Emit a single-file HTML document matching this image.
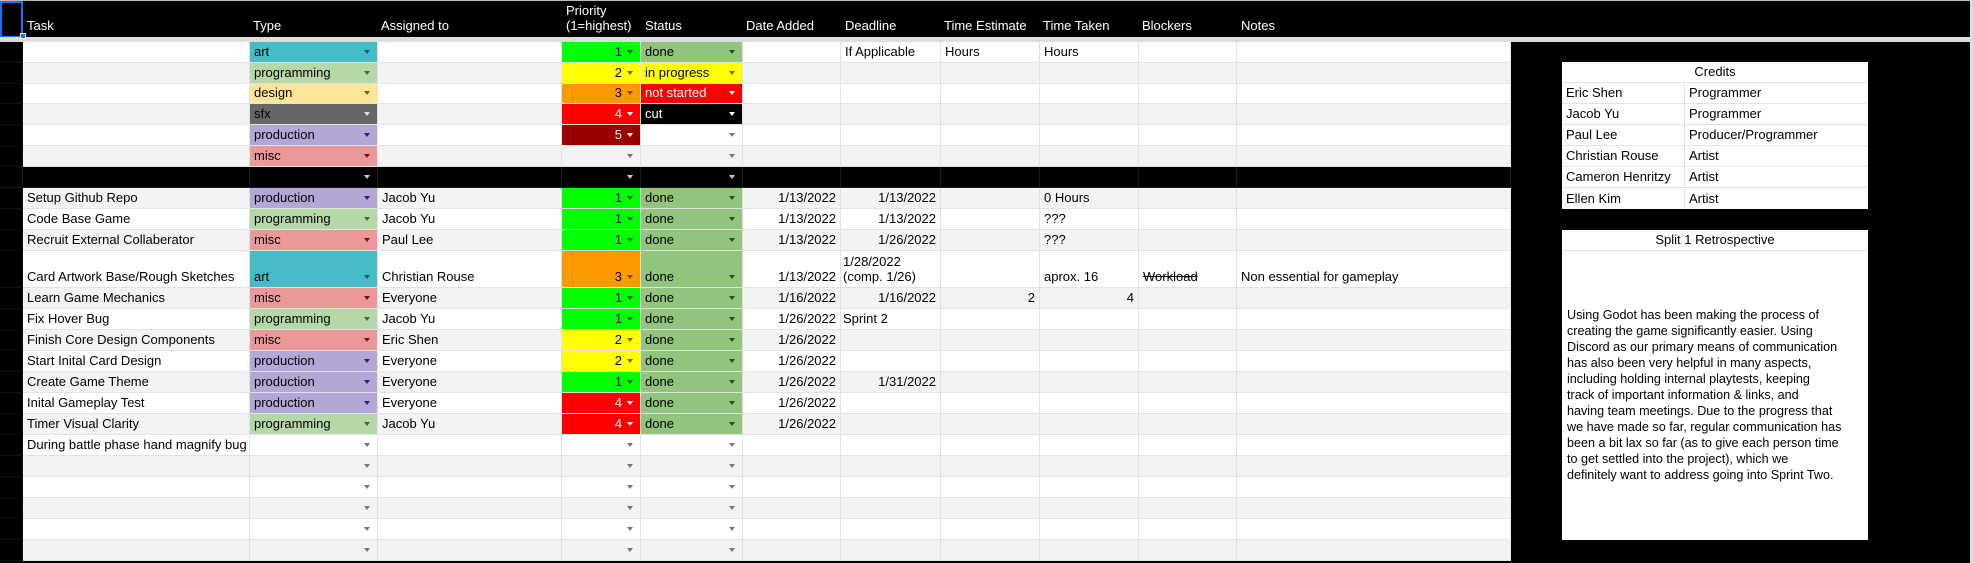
<!DOCTYPE html>
<html><head><meta charset="utf-8"><style>
*{margin:0;padding:0;box-sizing:border-box}
body{width:1973px;height:563px;overflow:hidden;background:#000;font-family:"Liberation Sans",sans-serif;font-size:13px;color:#000;position:relative}
.row{display:grid;grid-template-columns:23px 227px 128px 184px 79px 102px 98px 100px 99px 99px 98px 274px;height:21px;width:1511px}
.row>div{border-right:1px solid #e2e2e2;border-bottom:1px solid #e2e2e2;padding:0 4px 3px 4px;display:flex;align-items:flex-end;white-space:nowrap;overflow:hidden;position:relative;background:#fff;line-height:15px}
.row.g>div{background:#f3f3f3}
.row>div:first-child,.row.g>div:first-child{background:#000;border-color:#111}
.r{justify-content:flex-end}
.d{padding-right:18px!important}
.d::after{content:"";position:absolute;right:7px;bottom:8px;border-left:3.5px solid transparent;border-right:3.5px solid transparent;border-top:4px solid var(--ac,#777)}
.row>div.art{background:#46bdc6;--ac:#1b5e63}
.row>div.prog{background:#b6d7a8;--ac:#38761d}
.row>div.des{background:#ffe599;--ac:#7f6000}
.row>div.sfx{background:#666;--ac:#ddd}
.row>div.prod{background:#b4a7d6;--ac:#351c75}
.row>div.misc{background:#ea9999;--ac:#990000}
.row>div.p1{background:#00ff00;--ac:#1b5e20}
.row>div.p2{background:#ffff00;--ac:#7f6000}
.row>div.p3{background:#ff9900;--ac:#783f04}
.row>div.p4{background:#ff0000;color:#fff;--ac:#fff}
.row>div.p5{background:#990000;color:#fff;--ac:#fff}
.row>div.done{background:#93c47d;--ac:#274e13}
.row>div.inp{background:#ffff00;--ac:#7f6000}
.row>div.ns{background:#ff0000;color:#fff;--ac:#fff}
.row>div.cut{background:#000;color:#fff;--ac:#fff}
.row.blk>div{background:#000;border-color:#1a1a1a;--ac:#ccc}
.hdr{position:absolute;left:0;top:0;width:1973px;height:37px;background:#000;border-top:1px solid #bbb}
.hdr div{position:absolute;bottom:4px;color:#fff;line-height:15px;white-space:nowrap}
.band{position:absolute;left:0;top:37px;width:1973px;height:5px;background:#dadce0}
.body{position:absolute;left:0;top:42px}
.row.tall{height:37px}
.box{position:absolute;left:1562px;width:306px;background:#fff}
.box .c{height:21px;border-bottom:1px solid #e2e2e2;display:flex;align-items:flex-end;padding-bottom:3px;line-height:15px}
.box .c span{display:block;padding-left:4px}
.box .c span:first-child{width:123px;border-right:1px solid #e2e2e2;height:20px;margin-bottom:-3px;padding-top:2px}
.box .c span:last-child{height:20px;margin-bottom:-3px;padding-top:2px}
</style></head><body>
<div class="hdr">
<div style="left:0;top:0;bottom:auto;width:23px;height:37px;border:2px solid #1a73e8"></div>
<div style="left:27px">Task</div>
<div style="left:253px">Type</div>
<div style="left:381px">Assigned to</div>
<div style="left:566px">Priority<br>(1=highest)</div>
<div style="left:645px">Status</div>
<div style="left:746px">Date Added</div>
<div style="left:845px">Deadline</div>
<div style="left:944px">Time Estimate</div>
<div style="left:1043px">Time Taken</div>
<div style="left:1142px">Blockers</div>
<div style="left:1241px">Notes</div>
</div>
<div class="band"></div>
<div style="position:absolute;left:20px;top:33px;width:6px;height:6px;background:#1a73e8;border:1px solid #fff"></div>
<div class="body">
<div class="row"><div></div><div></div><div class="d art">art</div><div></div><div class="d r p1">1</div><div class="d done">done</div><div></div><div>If Applicable</div><div>Hours</div><div>Hours</div><div></div><div></div></div>
<div class="row g"><div></div><div></div><div class="d prog">programming</div><div></div><div class="d r p2">2</div><div class="d inp">in progress</div><div></div><div></div><div></div><div></div><div></div><div></div></div>
<div class="row" style="height:20px"><div></div><div></div><div class="d des">design</div><div></div><div class="d r p3">3</div><div class="d ns">not started</div><div></div><div></div><div></div><div></div><div></div><div></div></div>
<div class="row g"><div></div><div></div><div class="d sfx">sfx</div><div></div><div class="d r p4">4</div><div class="d cut">cut</div><div></div><div></div><div></div><div></div><div></div><div></div></div>
<div class="row"><div></div><div></div><div class="d prod">production</div><div></div><div class="d r p5">5</div><div class="d"></div><div></div><div></div><div></div><div></div><div></div><div></div></div>
<div class="row g"><div></div><div></div><div class="d misc">misc</div><div></div><div class="d"></div><div class="d"></div><div></div><div></div><div></div><div></div><div></div><div></div></div>
<div class="row blk"><div></div><div></div><div class="d"></div><div></div><div class="d"></div><div class="d"></div><div></div><div></div><div></div><div></div><div></div><div></div></div>

<div class="row g"><div></div><div>Setup Github Repo</div><div class="d prod">production</div><div>Jacob Yu</div><div class="d r p1">1</div><div class="d done">done</div><div class="r">1/13/2022</div><div class="r">1/13/2022</div><div></div><div>0 Hours</div><div></div><div></div></div>
<div class="row"><div></div><div>Code Base Game</div><div class="d prog">programming</div><div>Jacob Yu</div><div class="d r p1">1</div><div class="d done">done</div><div class="r">1/13/2022</div><div class="r">1/13/2022</div><div></div><div>???</div><div></div><div></div></div>
<div class="row g"><div></div><div>Recruit External Collaberator</div><div class="d misc">misc</div><div>Paul Lee</div><div class="d r p1">1</div><div class="d done">done</div><div class="r">1/13/2022</div><div class="r">1/26/2022</div><div></div><div>???</div><div></div><div></div></div>
<div class="row tall"><div></div><div>Card Artwork Base/Rough Sketches</div><div class="d art">art</div><div>Christian Rouse</div><div class="d r p3">3</div><div class="d done">done</div><div class="r">1/13/2022</div><div style="padding-left:2px">1/28/2022<br>(comp. 1/26)</div><div></div><div>aprox. 16</div><div><s>Workload</s></div><div>Non essential for gameplay</div></div>
<div class="row g"><div></div><div>Learn Game Mechanics</div><div class="d misc">misc</div><div>Everyone</div><div class="d r p1">1</div><div class="d done">done</div><div class="r">1/16/2022</div><div class="r">1/16/2022</div><div class="r">2</div><div class="r">4</div><div></div><div></div></div>
<div class="row"><div></div><div>Fix Hover Bug</div><div class="d prog">programming</div><div>Jacob Yu</div><div class="d r p1">1</div><div class="d done">done</div><div class="r">1/26/2022</div><div style="padding-left:2px">Sprint 2</div><div></div><div></div><div></div><div></div></div>
<div class="row g"><div></div><div>Finish Core Design Components</div><div class="d misc">misc</div><div>Eric Shen</div><div class="d r p2">2</div><div class="d done">done</div><div class="r">1/26/2022</div><div></div><div></div><div></div><div></div><div></div></div>
<div class="row"><div></div><div>Start Inital Card Design</div><div class="d prod">production</div><div>Everyone</div><div class="d r p2">2</div><div class="d done">done</div><div class="r">1/26/2022</div><div></div><div></div><div></div><div></div><div></div></div>
<div class="row g"><div></div><div>Create Game Theme</div><div class="d prod">production</div><div>Everyone</div><div class="d r p1">1</div><div class="d done">done</div><div class="r">1/26/2022</div><div class="r">1/31/2022</div><div></div><div></div><div></div><div></div></div>
<div class="row"><div></div><div>Inital Gameplay Test</div><div class="d prod">production</div><div>Everyone</div><div class="d r p4">4</div><div class="d done">done</div><div class="r">1/26/2022</div><div></div><div></div><div></div><div></div><div></div></div>
<div class="row g"><div></div><div>Timer Visual Clarity</div><div class="d prog">programming</div><div>Jacob Yu</div><div class="d r p4">4</div><div class="d done">done</div><div class="r">1/26/2022</div><div></div><div></div><div></div><div></div><div></div></div>
<div class="row"><div></div><div>During battle phase hand magnify bug</div><div class="d"></div><div></div><div class="d"></div><div class="d"></div><div></div><div></div><div></div><div></div><div></div><div></div></div>
<div class="row g"><div></div><div></div><div class="d"></div><div></div><div class="d"></div><div class="d"></div><div></div><div></div><div></div><div></div><div></div><div></div></div>
<div class="row"><div></div><div></div><div class="d"></div><div></div><div class="d"></div><div class="d"></div><div></div><div></div><div></div><div></div><div></div><div></div></div>
<div class="row g"><div></div><div></div><div class="d"></div><div></div><div class="d"></div><div class="d"></div><div></div><div></div><div></div><div></div><div></div><div></div></div>
<div class="row"><div></div><div></div><div class="d"></div><div></div><div class="d"></div><div class="d"></div><div></div><div></div><div></div><div></div><div></div><div></div></div>
<div class="row g"><div></div><div></div><div class="d"></div><div></div><div class="d"></div><div class="d"></div><div></div><div></div><div></div><div></div><div></div><div></div></div>
</div>

<div style="position:absolute;left:1970px;top:0;width:3px;height:563px;background:#ddd"></div>

<div class="box" style="top:62px">
<div class="c" style="justify-content:center">Credits</div>
<div class="c"><span>Eric Shen</span><span>Programmer</span></div>
<div class="c"><span>Jacob Yu</span><span>Programmer</span></div>
<div class="c"><span>Paul Lee</span><span>Producer/Programmer</span></div>
<div class="c"><span>Christian Rouse</span><span>Artist</span></div>
<div class="c"><span>Cameron Henritzy</span><span>Artist</span></div>
<div class="c" style="border-bottom:none"><span>Ellen Kim</span><span>Artist</span></div>
</div>

<div class="box" style="top:230px;height:310px">
<div class="c" style="justify-content:center">Split 1 Retrospective</div>
<div style="position:absolute;left:5px;top:77px;line-height:16px;white-space:nowrap;font-size:12.6px">Using Godot has been making the process of<br>creating the game significantly easier. Using<br>Discord as our primary means of communication<br>has also been very helpful in many aspects,<br>including holding internal playtests, keeping<br>track of important information &amp; links, and<br>having team meetings. Due to the progress that<br>we have made so far, regular communication has<br>been a bit lax so far (as to give each person time<br>to get settled into the project), which we<br>definitely want to address going into Sprint Two.</div>
</div>
</body></html>
